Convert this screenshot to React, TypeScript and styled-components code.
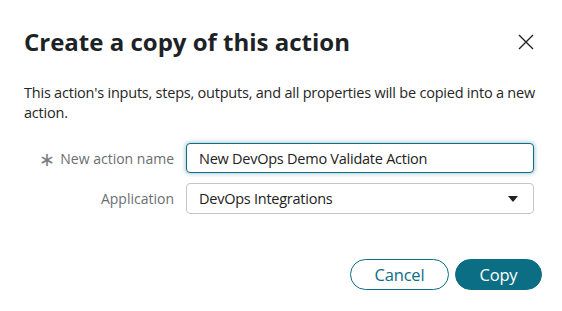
import styled, { createGlobalStyle } from 'styled-components'

const Global = createGlobalStyle`
  html, body {
    margin: 0;
    padding: 0;
    background: #fff;
  }
  body {
    font-family: 'Open Sans', 'Noto Sans', sans-serif;
    color: #222;
  }
`

export default function App() {
  return (
    <>
      <Global />
      <Dialog>
        <Header>
          <Title>Create a copy of this action</Title>
          <CloseButton aria-label="Close">
            <svg width="16" height="16" viewBox="0 0 16 16">
              <path d="M1 1 L15 15 M15 1 L1 15" stroke="#222" strokeWidth="1.4" fill="none" />
            </svg>
          </CloseButton>
        </Header>
        <Description>
          This action's inputs, steps, outputs, and all properties will be copied into a new action.
        </Description>
        <Form>
          <Label>
            <Star>∗</Star>New action name
          </Label>
          <TextInput defaultValue="New DevOps Demo Validate Action" $focused />
          <Label>Application</Label>
          <Select>
            <span>DevOps Integrations</span>
            <Caret />
          </Select>
        </Form>
        <Footer>
          <Button>Cancel</Button>
          <Button $primary>Copy</Button>
        </Footer>
      </Dialog>
    </>
  )
}

const Dialog = styled.div`
  width: 562px;
  height: 311px;
  box-sizing: border-box;
  padding: 26px 20px 0 24px;
`

const Header = styled.div`
  display: flex;
  justify-content: space-between;
  align-items: center;
`

const Title = styled.h1`
  margin: 0;
  font-size: 24px;
  font-weight: 700;
  color: #1d2226;
  line-height: 32px;
`

const CloseButton = styled.button`
  border: none;
  background: none;
  padding: 0;
  margin-right: 8px;
  width: 16px;
  height: 16px;
  display: flex;
`

const Description = styled.p`
  margin: 25px 0 0;
  font-size: 14.5px;
  letter-spacing: -0.22px;
  line-height: 20px;
  color: #262626;
`

const Form = styled.div`
  display: grid;
  grid-template-columns: 150px 348px;
  column-gap: 12px;
  row-gap: 10px;
  align-items: center;
  margin-top: 20px;
`

const Label = styled.label`
  font-size: 14px;
  color: #6b6e70;
  white-space: nowrap;
  display: flex;
  align-items: center;
  justify-content: flex-end;
`

const Star = styled.span`
  font-size: 19px;
  font-weight: 300;
  line-height: 1;
  margin-right: 5px;
  color: #7a7d80;
  position: relative;
  top: 1px;
`

const TextInput = styled.input<{ $focused?: boolean }>`
  box-sizing: border-box;
  height: 30px;
  width: 100%;
  border: 1px solid ${(p) => (p.$focused ? '#0b6e85' : '#c4c6c8')};
  box-shadow: ${(p) => (p.$focused ? '0 0 4px 1px rgba(11, 110, 133, 0.35)' : 'none')};
  border-radius: 4px;
  padding: 0 12px;
  font-family: inherit;
  font-size: 14.5px;
  letter-spacing: -0.25px;
  color: #222;
  outline: none;
`

const Select = styled.div`
  box-sizing: border-box;
  height: 31px;
  border: 1px solid #c4c6c8;
  border-radius: 4px;
  padding: 0 15px 0 12px;
  display: flex;
  align-items: center;
  justify-content: space-between;
  font-size: 14.5px;
  letter-spacing: -0.25px;
  color: #222;
`

const Caret = styled.span`
  width: 0;
  height: 0;
  border-left: 5px solid transparent;
  border-right: 5px solid transparent;
  border-top: 6px solid #1d2226;
`

const Footer = styled.div`
  display: flex;
  justify-content: flex-end;
  gap: 6px;
  margin-top: 45px;
`

const Button = styled.button<{ $primary?: boolean }>`
  height: 31px;
  box-sizing: border-box;
  border-radius: 16px;
  font-family: inherit;
  font-size: 16.5px;
  letter-spacing: -0.2px;
  padding: 0;
  width: ${(p) => (p.$primary ? '87px' : '99px')};
  border: 1px solid #0b6e85;
  background: ${(p) => (p.$primary ? '#0b6e85' : '#fff')};
  color: ${(p) => (p.$primary ? '#fff' : '#0b6e85')};
`
